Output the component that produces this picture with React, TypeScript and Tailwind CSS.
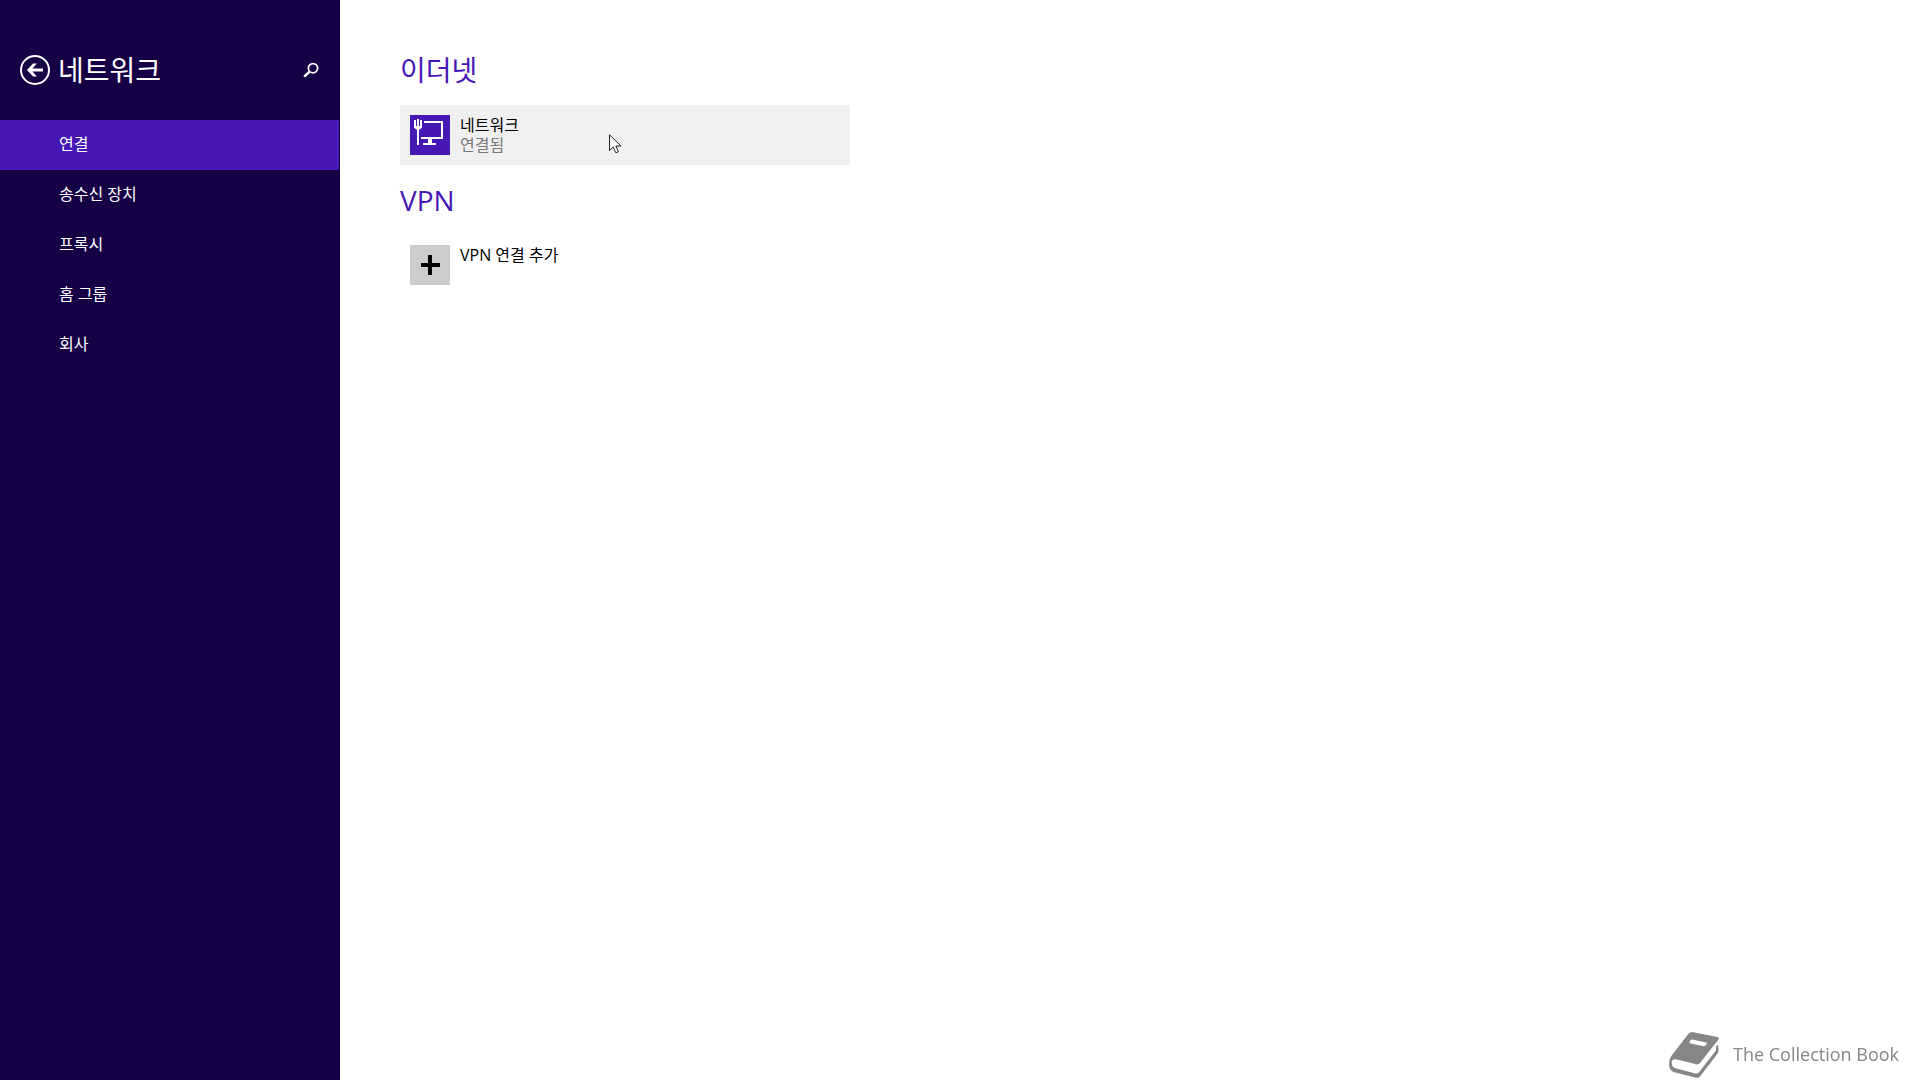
const navItems = ['연결', '송수신 장치', '프록시', '홈 그룹', '회사'];

function BackIcon() {
  return (
    <svg viewBox="0 0 30 30" className="size-[30px]" fill="none" stroke="#fff" aria-hidden="true">
      <circle cx="15" cy="15" r="14" strokeWidth="2" />
      <path d="M8.5 15H23" strokeWidth="3" />
      <path d="M7 15L13 8.5H16.8L11.3 15L16.8 21.5H13Z" fill="#fff" stroke="none" />
    </svg>
  );
}

function SearchIcon() {
  return (
    <svg viewBox="0 0 16 16" className="size-4" fill="none" stroke="#fff" aria-hidden="true">
      <circle cx="10" cy="6.2" r="4.6" strokeWidth="1.8" />
      <path d="M6.6 9.600L1.2 14.600" strokeWidth="2.6" />
    </svg>
  );
}

function EthernetIcon() {
  return (
    <svg viewBox="0 0 40 40" className="size-10 shrink-0 bg-[#4617b4]" fill="#fff" aria-hidden="true">
      <path d="M4 5h2v6h1V4h2v7h1V5h2v7.500l-2 2h-1V30H7V14.500H6l-2-2Z" />
      <path d="M14 6H33V24H11V22H31V8H14Z" />
      <path d="M18 24h4v4h4v2H13v-2h5Z" />
    </svg>
  );
}

function PlusIcon() {
  return (
    <svg viewBox="0 0 40 40" className="size-10 shrink-0 bg-[#cccccc]" fill="#000" aria-hidden="true">
      <path d="M18 10h4v8h8v4h-8v8h-4v-8h-7v-4h7Z" />
    </svg>
  );
}

function BookIcon() {
  return (
    <svg viewBox="0 0 50 46" className="h-[46px] w-[50px]" aria-hidden="true">
      <path
        fill="#868686"
        fillRule="evenodd"
        d="M22 .3Q23 0 24 .2L48.500 5Q50.500 5.700 49.500 7.500L31 31Q29.500 32.800 27 32.300L7 27.300Q3 26.500 2.700 30Q2.700 34.500 5.500 36L26.500 41.500Q28.500 42 30 40.300L47 18.500V14.500L49 12.500Q50 18 49 21L31 44.500Q29.500 46.300 27 45.700L4.500 40Q0 38 0 31Q0 27 3 23L18.500 3Q20 1 22 .3ZM21.500 8Q20.300 10 20.500 11.300L34.500 14.200Q36 14.200 37 13L38.200 10.800L23.500 7.500Q22.300 7.300 21.500 8Z"
      />
    </svg>
  );
}

function Cursor() {
  return (
    <svg viewBox="0 0 13 20" className="pointer-events-none absolute top-[29px] left-[209px] h-5 w-[13px]" aria-hidden="true">
      <path
        d="M.5 .8V16.500L4.200 13L6.800 18.800L9.400 17.700L6.900 12H12Z"
        fill="#fff"
        stroke="#222"
        strokeWidth="1"
      />
    </svg>
  );
}

export default function App() {
  return (
    <div className="flex min-h-screen bg-white font-['Open_Sans','Noto_Sans_CJK_KR',sans-serif] text-base leading-5 text-black">
      <aside className="w-[340px] shrink-0 bg-[#150045] text-white">
        <header className="flex h-[120px] items-center pt-10 pr-[21px] pb-5 pl-5">
          <button type="button" aria-label="뒤로" className="mr-2">
            <BackIcon />
          </button>
          <h1 className="text-[28px] leading-9">네트워크</h1>
          <button type="button" aria-label="검색" className="ml-auto">
            <SearchIcon />
          </button>
        </header>
        <nav className="pr-px">
          {navItems.map((item, i) => (
            <a
              key={item}
              href="#"
              aria-current={i === 0 ? 'page' : undefined}
              className="flex h-[50px] items-center pb-0.5 pl-[59px] aria-[current=page]:bg-[#4617b4]"
            >
              {item}
            </a>
          ))}
        </nav>
      </aside>

      <main className="flex-1 px-[60px] pt-[50px]">
        <section>
          <h2 className="text-[28px] leading-10 text-[#4617b4]">이더넷</h2>
          <div className="relative mt-[15px] max-w-[450px]">
            <button type="button" className="flex w-full gap-[10px] bg-[#f0f0f0] p-[10px] text-left">
              <EthernetIcon />
              <span className="flex flex-col">
                <span>네트워크</span>
                <span className="text-[#777777]">연결됨</span>
              </span>
            </button>
            <Cursor />
          </div>
        </section>
        <section className="mt-[15px]">
          <h2 className="text-[28px] leading-10 text-[#4617b4]">VPN</h2>
          <button type="button" className="mt-[15px] flex w-full max-w-[450px] gap-[10px] p-[10px] text-left">
            <PlusIcon />
            <span>VPN 연결 추가</span>
          </button>
        </section>
      </main>

      <div className="fixed right-[21px] bottom-[2px] flex items-center gap-[14px]">
        <BookIcon />
        <span className="pb-0.5 text-lg text-[#868686]">The Collection Book</span>
      </div>
    </div>
  );
}
